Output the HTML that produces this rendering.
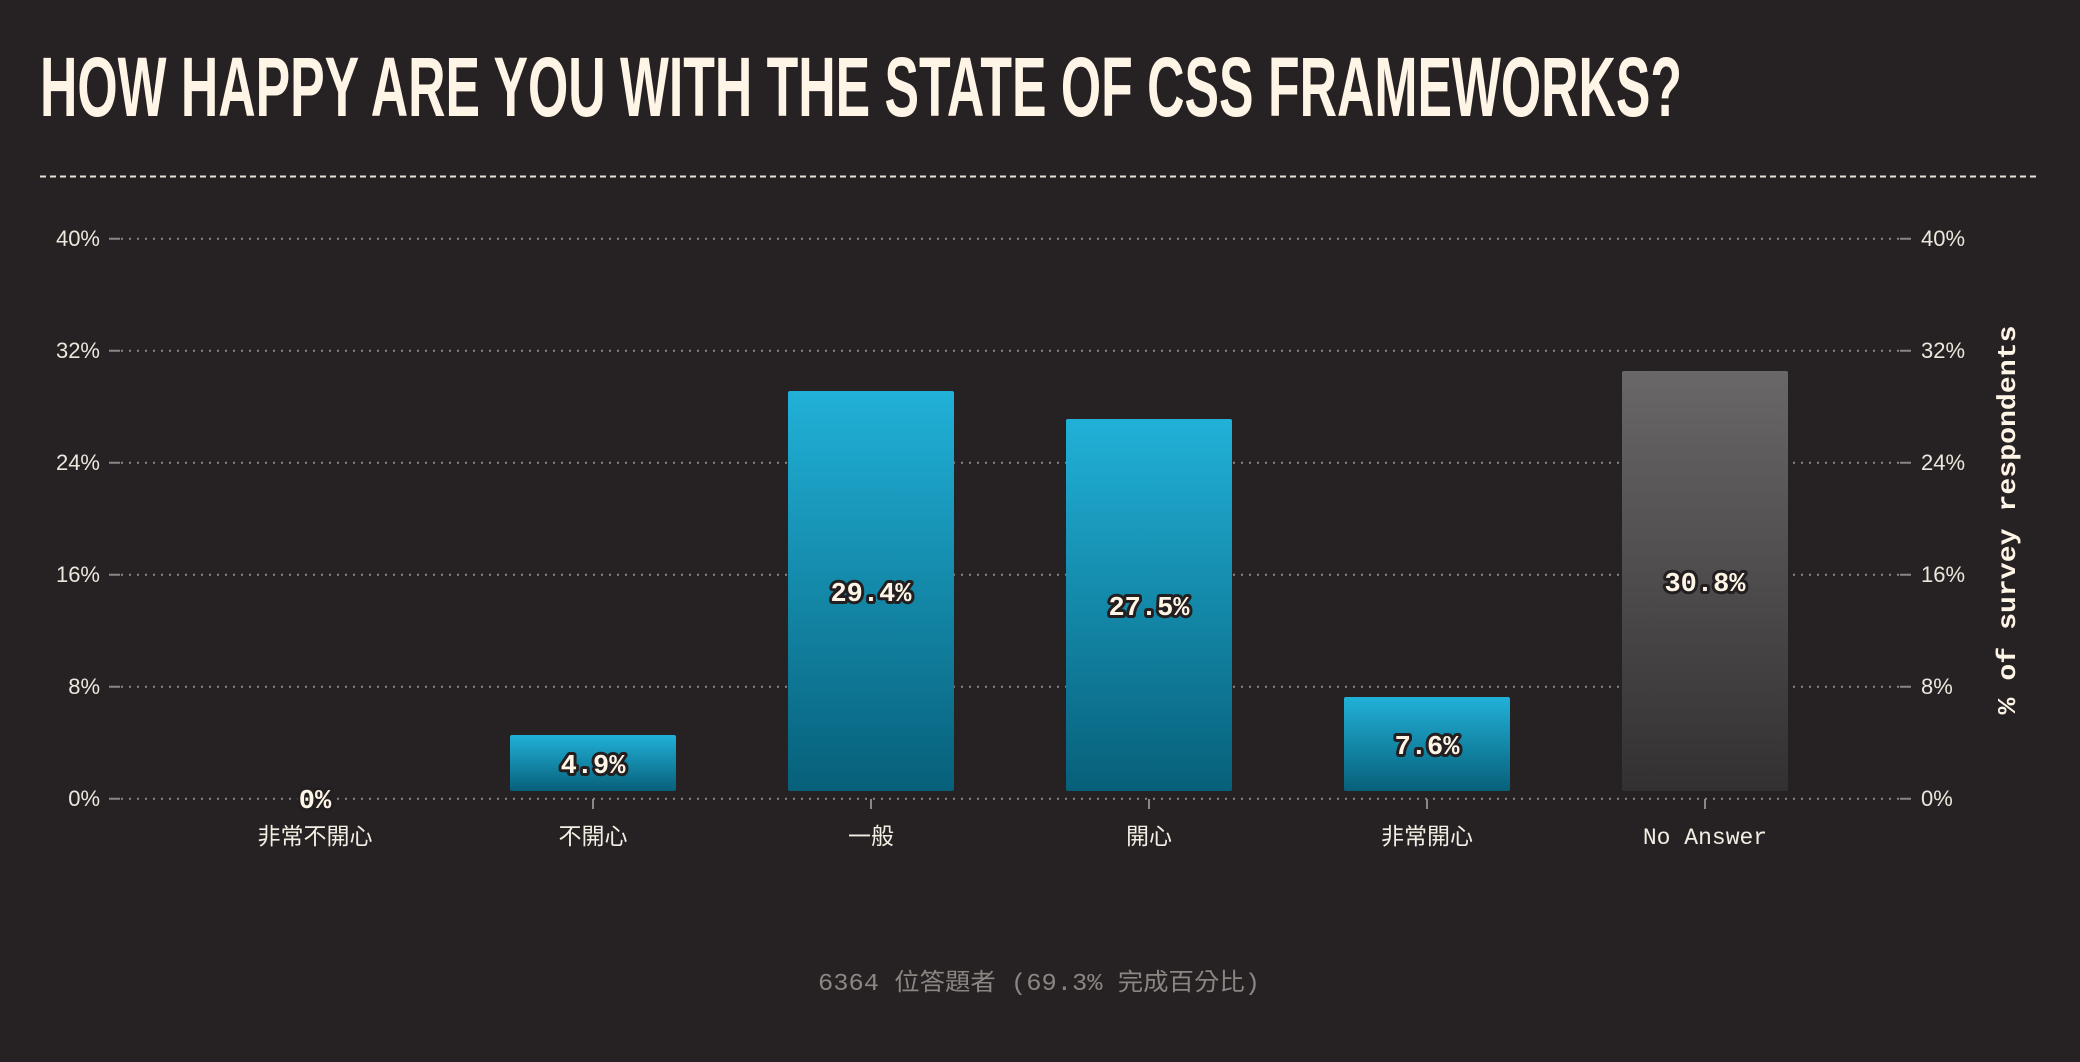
<!DOCTYPE html>
<html><head><meta charset="utf-8"><style>
html,body{margin:0;padding:0;background:#262224;}
svg{display:block}
.ax{font-family:"Liberation Sans","Noto Sans CJK TC",sans-serif;font-size:22px;fill:#ece6dc}
.xl{font-family:"Liberation Mono","Noto Sans CJK TC",monospace;font-size:23px;fill:#f3ede3}
.v{font-family:"Liberation Mono",monospace;font-weight:bold;font-size:27px;fill:#fff5e6;stroke:#231f20;stroke-width:6px;paint-order:stroke;stroke-linejoin:round}
</style></head><body>
<svg width="2080" height="1062" viewBox="0 0 2080 1062" xmlns="http://www.w3.org/2000/svg">
<defs>
<linearGradient id="b" x1="0" y1="0" x2="0" y2="1"><stop offset="0" stop-color="#21b1d8"/><stop offset="1" stop-color="#07607a"/></linearGradient>
<linearGradient id="g" x1="0" y1="0" x2="0" y2="1"><stop offset="0" stop-color="#696767"/><stop offset="1" stop-color="#333032"/></linearGradient>
</defs>
<rect width="2080" height="1062" fill="#262224"/>
<text x="40" y="116" textLength="1642" lengthAdjust="spacingAndGlyphs" font-family="Liberation Sans Narrow, Liberation Sans, sans-serif" font-weight="bold" font-size="84" fill="#fff5e6">HOW HAPPY ARE YOU WITH THE STATE OF CSS FRAMEWORKS?</text>
<line x1="40" y1="176.5" x2="2040" y2="176.5" stroke="#e8e2d8" stroke-width="2" stroke-dasharray="6,4"/>
<g stroke="#8a8683" stroke-width="2">
<line x1="121" y1="238.8" x2="1900" y2="238.8" stroke-dasharray="2,6"/>
<line x1="121" y1="350.8" x2="1900" y2="350.8" stroke-dasharray="2,6"/>
<line x1="121" y1="462.8" x2="1900" y2="462.8" stroke-dasharray="2,6"/>
<line x1="121" y1="574.8" x2="1900" y2="574.8" stroke-dasharray="2,6"/>
<line x1="121" y1="686.8" x2="1900" y2="686.8" stroke-dasharray="2,6"/>
<line x1="121" y1="798.8" x2="1900" y2="798.8" stroke-dasharray="2,6"/>
<path d="M109 238.8h11M109 350.8h11M109 462.8h11M109 574.8h11M109 686.8h11M109 798.8h11M1900 238.8h11M1900 350.8h11M1900 462.8h11M1900 574.8h11M1900 686.8h11M1900 798.8h11"/>
<path d="M593 799v10M871 799v10M1149 799v10M1427 799v10M1705 799v10"/>
</g>
<g class="ax" text-anchor="end">
<text x="100" y="246">40%</text><text x="100" y="358">32%</text><text x="100" y="470">24%</text><text x="100" y="582">16%</text><text x="100" y="694">8%</text><text x="100" y="806">0%</text>
</g>
<g class="ax">
<text x="1921" y="246">40%</text><text x="1921" y="358">32%</text><text x="1921" y="470">24%</text><text x="1921" y="582">16%</text><text x="1921" y="694">8%</text><text x="1921" y="806">0%</text>
</g>
<rect x="510" y="735" width="166" height="56" rx="2" fill="url(#b)"/>
<rect x="788" y="391" width="166" height="400" rx="2" fill="url(#b)"/>
<rect x="1066" y="419" width="166" height="372" rx="2" fill="url(#b)"/>
<rect x="1344" y="697" width="166" height="94" rx="2" fill="url(#b)"/>
<rect x="1622" y="371" width="166" height="420" rx="2" fill="url(#g)"/>
<g class="v" text-anchor="middle">
<text x="315" y="808">0%</text>
<text x="593" y="773">4.9%</text>
<text x="871" y="601">29.4%</text>
<text x="1149" y="615">27.5%</text>
<text x="1427" y="754">7.6%</text>
<text x="1705" y="591">30.8%</text>
</g>
<g class="xl" text-anchor="middle">
<text x="315" y="844">非常不開心</text>
<text x="593" y="844">不開心</text>
<text x="871" y="844">一般</text>
<text x="1149" y="844">開心</text>
<text x="1427" y="844">非常開心</text>
<text x="1705" y="844">No Answer</text>
</g>
<text transform="translate(2015,520) rotate(-90)" text-anchor="middle" textLength="389" lengthAdjust="spacingAndGlyphs" font-family="Liberation Mono, monospace" font-weight="bold" font-size="26" fill="#fff5e6">% of survey respondents</text>
<text x="1039" y="990" text-anchor="middle" textLength="442" lengthAdjust="spacingAndGlyphs" font-family="Liberation Mono, Noto Sans CJK TC, monospace" font-size="24" fill="#8b8682">6364 位答題者 (69.3% 完成百分比)</text>
</svg>
</body></html>
